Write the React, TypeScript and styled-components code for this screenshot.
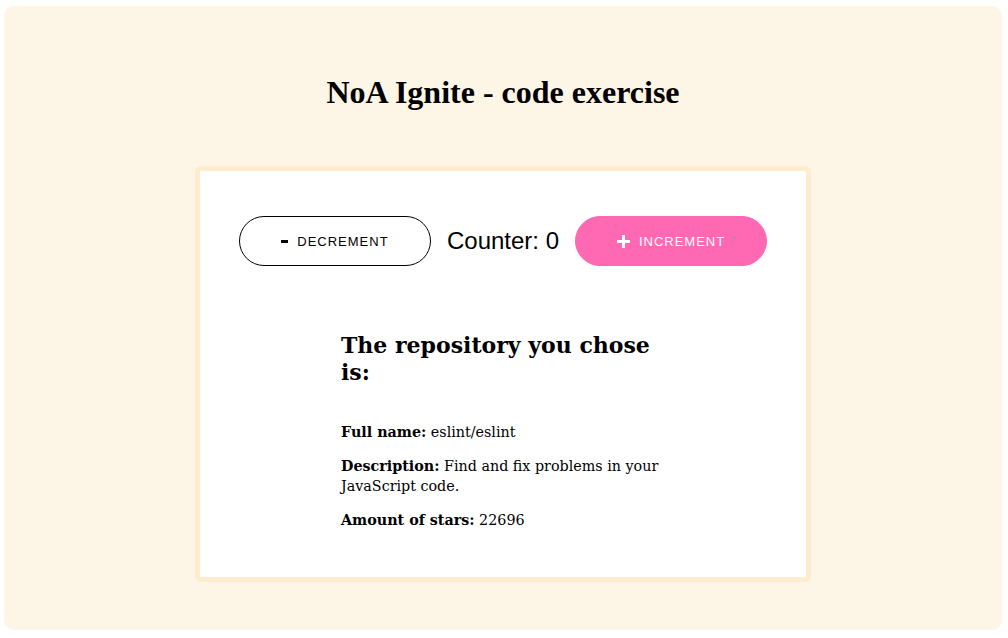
import React, { useState } from "react";
import styled, { createGlobalStyle } from "styled-components";

const GlobalStyle = createGlobalStyle`
  html, body { margin: 0; padding: 0; background: #ffffff; }
  * { box-sizing: border-box; }
`;

const Page = styled.div`
  margin: 6px 6px 8px 4px;
  height: 624px;
  background: #fdf5e6;
  border-radius: 10px;
  padding-top: 68px;
  display: flex;
  flex-direction: column;
  align-items: center;
`;

const Title = styled.h1`
  margin: 0;
  font-family: "Liberation Serif", "Times New Roman", serif;
  font-weight: 700;
  font-size: 32px;
  line-height: 37px;
  color: #000;
`;

const Card = styled.section`
  margin-top: 55px;
  width: 616px;
  height: 416px;
  background: #ffffff;
  border: 5px solid #ffebcd;
  border-radius: 6px;
  padding-top: 45px;
`;

const CounterRow = styled.div`
  display: flex;
  justify-content: center;
  align-items: center;
  gap: 16px;
`;

const PillButton = styled.button<{ $primary?: boolean }>`
  width: 192px;
  height: 50px;
  border-radius: 25px;
  border: 1px solid ${(p) => (p.$primary ? "#ff69b4" : "#000")};
  background: ${(p) => (p.$primary ? "#ff69b4" : "#fff")};
  color: ${(p) => (p.$primary ? "#fff" : "#000")};
  display: flex;
  align-items: center;
  justify-content: center;
  gap: 9px;
  font-family: "Liberation Sans", Arial, sans-serif;
  font-size: 13px;
  letter-spacing: 1px;
  text-transform: uppercase;
  cursor: pointer;
  padding: 0;
`;

const CounterText = styled.span`
  font-family: "Liberation Sans", Arial, sans-serif;
  font-size: 24px;
  color: #000;
`;

const Repo = styled.div`
  width: 324px;
  margin: 66px auto 0;
  font-family: "DejaVu Serif", Georgia, serif;
  color: #000;
`;

const RepoHeading = styled.h2`
  margin: 0 0 36px;
  font-size: 22px;
  line-height: 27px;
  font-weight: 700;
`;

const Field = styled.p`
  margin: 0 0 14px;
  font-size: 14.3px;
  line-height: 20px;
  b { font-weight: 700; }
`;

const MinusIcon = () => (
  <svg width="7" height="3" viewBox="0 0 7 3" aria-hidden="true">
    <rect x="0" y="0" width="7" height="3" fill="currentColor" />
  </svg>
);

const PlusIcon = () => (
  <svg width="13" height="13" viewBox="0 0 13 13" aria-hidden="true">
    <rect x="5" y="0" width="3" height="13" fill="currentColor" />
    <rect x="0" y="5" width="13" height="3" fill="currentColor" />
  </svg>
);

export default function App() {
  const [count, setCount] = useState(0);
  return (
    <>
      <GlobalStyle />
      <Page>
        <Title>NoA Ignite - code exercise</Title>
        <Card>
          <CounterRow>
            <PillButton onClick={() => setCount((c) => c - 1)}>
              <MinusIcon />
              Decrement
            </PillButton>
            <CounterText>Counter: {count}</CounterText>
            <PillButton $primary onClick={() => setCount((c) => c + 1)}>
              <PlusIcon />
              Increment
            </PillButton>
          </CounterRow>
          <Repo>
            <RepoHeading>The repository you chose is:</RepoHeading>
            <Field>
              <b>Full name:</b> eslint/eslint
            </Field>
            <Field>
              <b>Description:</b> Find and fix problems in your JavaScript code.
            </Field>
            <Field>
              <b>Amount of stars:</b> 22696
            </Field>
          </Repo>
        </Card>
      </Page>
    </>
  );
}
